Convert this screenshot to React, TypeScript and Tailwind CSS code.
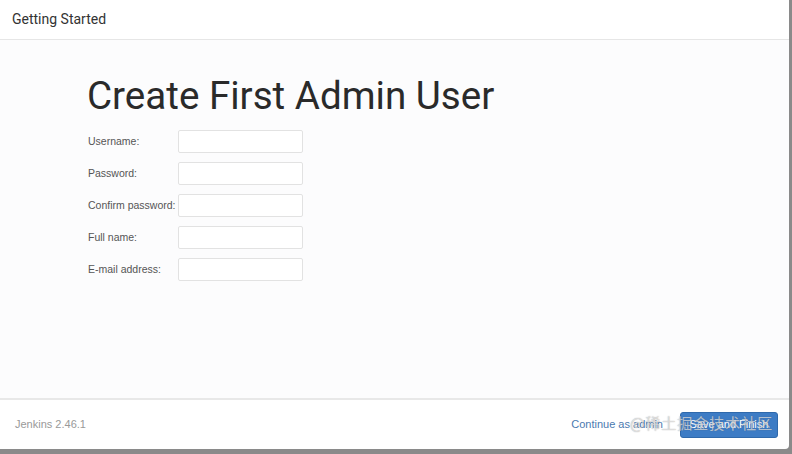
const fields = ["Username:", "Password:", "Confirm password:", "Full name:", "E-mail address:"];

export default function App() {
  return (
    <div className="w-[792px] h-[454px] bg-[#8a8a8a] overflow-hidden" style={{ fontFamily: "Roboto, sans-serif" }}>
      <div className="relative w-[789px] h-[449px] bg-white rounded-br-[4px] flex flex-col">
        <div className="h-[40px] shrink-0 flex items-center px-[12px] border-b border-[#e6e6e6]">
          <span className="text-[14px] text-[#333]">Getting Started</span>
        </div>
        <div className="flex-1 bg-[#fcfcfd] pl-[87px] pt-[33px]">
          <h1 className="text-[38.6px] leading-[46px] font-normal text-[#2a2a2a]">Create First Admin User</h1>
          <div className="mt-[11px] flex flex-col gap-[9px]" style={{ fontFamily: "'Liberation Sans', Arial, sans-serif" }}>
            {fields.map((f) => (
              <div key={f} className="flex items-center h-[23px]">
                <label className="w-[91px] pl-[1px] text-[10.5px] text-[#555] whitespace-nowrap">{f}</label>
                <input className="w-[125px] h-[23px] bg-white border border-[#e2e2e2] rounded-[2px]" />
              </div>
            ))}
          </div>
        </div>
        <div className="h-[51px] shrink-0 border-t-2 border-[#e8e8e8] flex items-center pl-[15px] pr-[11px]" style={{ fontFamily: "'Liberation Sans', Arial, sans-serif" }}>
          <span className="text-[11px] text-[#999]">Jenkins 2.46.1</span>
          <div className="ml-auto flex items-center gap-[17px]">
            <span className="text-[11px] text-[#4b7ab0]">Continue as admin</span>
            <button className="w-[98px] h-[26px] rounded-[3px] bg-[#3d7cc5] border border-[#2f69ab] text-white text-[11px]">Save and Finish</button>
          </div>
        </div>
        <div className="absolute left-[630px] top-[413px] text-[15px] leading-[20px] whitespace-nowrap text-white/60 tracking-[1px] pointer-events-none" style={{ fontFamily: "'Noto Sans CJK SC', sans-serif", textShadow: "0 0 1px rgba(80,80,80,0.6)" }}>
          @稀土掘金技术社区
        </div>
      </div>
    </div>
  );
}
